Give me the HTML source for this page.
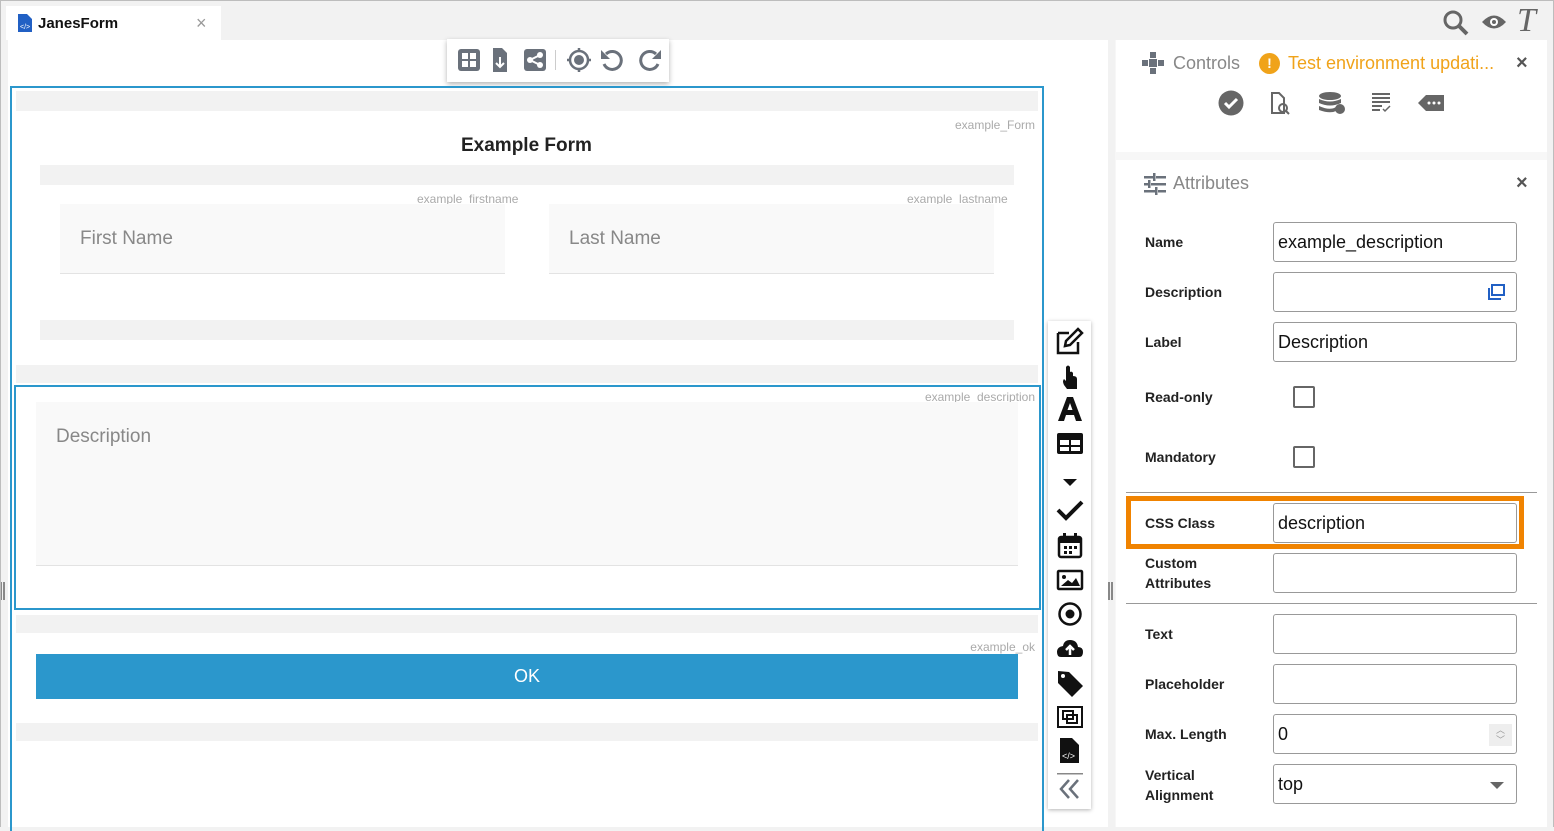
<!DOCTYPE html><html><head><style>
*{box-sizing:border-box;margin:0;padding:0}
body{width:1554px;height:827px;overflow:hidden;background:#f2f2f2;font-family:"Liberation Sans",sans-serif;position:relative}
.a{position:absolute}
.g{background:#f2f2f2}
.lbl{font-size:12px;color:#aaa}
.fl{font-size:14px;font-weight:bold;color:#222;left:1145px}
.in{position:absolute;left:1273px;width:244px;height:40px;border:1px solid #999;border-radius:3px;background:#fff;font-size:18px;color:#111;padding:9px 4px}
</style></head><body>
<div class="a" style="left:0;top:0;width:1554px;height:827px;border:1px solid #bdbdbd;border-bottom:none;z-index:9;pointer-events:none"></div>
<!-- tab -->
<div class="a" style="left:6px;top:6px;width:215px;height:34px;background:#fff"></div>
<svg class="a" style="left:18px;top:14px" width="14" height="18" viewBox="0 0 14 18"><path d="M0 0H9L14 5V18H0Z" fill="#2160c4"/><text x="2" y="15" font-size="7" fill="#fff">&lt;/&gt;</text></svg>
<div class="a" style="left:38px;top:15px;font-size:15px;font-weight:bold;color:#111">JanesForm</div>
<div class="a" style="left:196px;top:13px;font-size:18px;color:#999">×</div>
<!-- top right icons -->
<svg class="a" style="left:1442px;top:10px" width="28" height="26" viewBox="0 0 28 26"><circle cx="11" cy="10" r="8" fill="none" stroke="#666" stroke-width="3"/><path d="M17 16L25 24" stroke="#666" stroke-width="4"/></svg>
<svg class="a" style="left:1481px;top:13px" width="26" height="18" viewBox="0 0 26 18"><path d="M1 9Q13 -4 25 9Q13 22 1 9Z" fill="#666"/><circle cx="13" cy="9" r="4" fill="#fff"/><circle cx="13" cy="9" r="2" fill="#666"/></svg>
<div class="a" style="left:1517px;top:2px;font-family:'Liberation Serif',serif;font-style:italic;font-size:34px;color:#666">T</div>
<!-- canvas -->
<div class="a" style="left:8px;top:40px;width:1100px;height:787px;background:#fff"></div>
<div class="a" style="left:0;top:582px;width:5px;height:18px;border-left:2px solid #888;border-right:2px solid #888"></div>
<div class="a" style="left:1108px;top:582px;width:5px;height:18px;border-left:2px solid #888;border-right:2px solid #888"></div>
<!-- toolbar -->
<div class="a" style="left:447px;top:39px;width:222px;height:43px;background:#fff;box-shadow:0 2px 5px rgba(0,0,0,.3)"></div>
<svg class="a" style="left:458px;top:48px" width="205" height="24" viewBox="0 0 205 24" fill="#6a717b">
<rect x="0" y="1" width="22" height="22" rx="3"/><g fill="#fff"><rect x="4" y="5" width="6" height="6"/><rect x="12" y="5" width="6" height="6"/><rect x="4" y="13" width="6" height="6"/><rect x="12" y="13" width="6" height="6"/></g>
<path d="M35 0H44L49 5V24H35Z"/><path d="M42 9V19M38 15L42 19L46 15" stroke="#fff" stroke-width="2" fill="none"/>
<rect x="66" y="1" width="22" height="22" rx="3"/><g fill="#fff"><circle cx="72" cy="12" r="3"/><circle cx="82" cy="7" r="3"/><circle cx="82" cy="17" r="3"/></g><path d="M72 12L82 7M72 12L82 17" stroke="#fff" stroke-width="2"/>
<rect x="97" y="2" width="1" height="20" fill="#ccc"/>
<circle cx="121" cy="12" r="9" fill="none" stroke="#6a717b" stroke-width="2.5"/><circle cx="121" cy="12" r="5"/><path d="M121 0V4M121 20V24M109 12H113M129 12H133" stroke="#6a717b" stroke-width="2.5"/>
<path d="M148 6A9 9 0 1 1 146 16" fill="none" stroke="#6a717b" stroke-width="3"/><path d="M143 2V11H152Z"/>
<path d="M198 6A9 9 0 1 0 200 16" fill="none" stroke="#6a717b" stroke-width="3"/><path d="M203 2V11H194Z"/>
</svg>
<!-- form -->
<div class="a" style="left:10px;top:86px;width:1034px;height:745px;border:2px solid #2b97cc;border-bottom:none"></div>
<div class="a g" style="left:16px;top:91px;width:1022px;height:20px"></div>
<div class="a lbl" style="right:519px;top:118px">example_Form</div>
<div class="a" style="left:461px;top:135px;font-size:19px;font-weight:bold;color:#222">Example Form</div>
<div class="a g" style="left:40px;top:165px;width:974px;height:20px"></div>
<div class="a lbl" style="left:417px;top:192px">example_firstname</div>
<div class="a lbl" style="left:907px;top:192px">example_lastname</div>
<div class="a" style="left:60px;top:204px;width:445px;height:70px;background:#f9f9f9;border-bottom:1px solid #e3e3e3"></div>
<div class="a" style="left:80px;top:228px;font-size:19px;color:#888">First Name</div>
<div class="a" style="left:549px;top:204px;width:445px;height:70px;background:#f9f9f9;border-bottom:1px solid #e3e3e3"></div>
<div class="a" style="left:569px;top:228px;font-size:19px;color:#888">Last Name</div>
<div class="a g" style="left:40px;top:320px;width:974px;height:20px"></div>
<div class="a g" style="left:16px;top:365px;width:1022px;height:18px"></div>
<div class="a" style="left:14px;top:385px;width:1027px;height:225px;border:2px solid #2b97cc"></div>
<div class="a lbl" style="right:519px;top:390px">example_description</div>
<div class="a" style="left:36px;top:402px;width:982px;height:164px;background:#f9f9f9;border-bottom:1px solid #e3e3e3"></div>
<div class="a" style="left:56px;top:426px;font-size:19px;color:#888">Description</div>
<div class="a g" style="left:16px;top:615px;width:1022px;height:18px"></div>
<div class="a lbl" style="right:519px;top:640px">example_ok</div>
<div class="a" style="left:36px;top:654px;width:982px;height:45px;background:#2b97cc;color:#fff;font-size:18px;text-align:center;line-height:45px">OK</div>
<div class="a g" style="left:16px;top:723px;width:1022px;height:18px"></div>
<!-- side toolbox -->
<div class="a" style="left:1048px;top:321px;width:43px;height:488px;background:#fff;box-shadow:0 1px 4px rgba(0,0,0,.3)"></div>
<svg class="a" style="left:1055px;top:327px" width="30" height="478" viewBox="0 0 30 478" fill="#111">
<path d="M3 6H14M3 6V26H23V15" fill="none" stroke="#111" stroke-width="2.5"/><path d="M10 19L11 14L23 2L27 6L15 18Z" fill="none" stroke="#111" stroke-width="2.5"/>
<path d="M11 42V54L9 52Q7 54 9 58L12 62H22V52Q22 49 18 49V46Q17 44 15 45V40Q13 37 11 40Z"/>
<path d="M3 94L12 70H18L27 94H21L19 88H11L9 94ZM12.5 83H17.5L15 76Z"/>
<rect x="2" y="106" width="26" height="21" rx="2"/><g fill="#fff"><rect x="5" y="113" width="9" height="5"/><rect x="16" y="113" width="9" height="5"/><rect x="5" y="120" width="9" height="4"/><rect x="16" y="120" width="9" height="4"/></g>
<path d="M8 152H22L15 159Z"/>
<path d="M3 183L11 191L27 175" fill="none" stroke="#111" stroke-width="4"/>
<rect x="4" y="210" width="22" height="20" rx="2" fill="none" stroke="#111" stroke-width="2.5"/><rect x="4" y="210" width="22" height="6"/><rect x="8" y="206" width="3" height="5"/><rect x="19" y="206" width="3" height="5"/><g fill="#111"><rect x="9" y="219" width="3" height="3"/><rect x="14" y="219" width="3" height="3"/><rect x="19" y="219" width="3" height="3"/><rect x="9" y="224" width="3" height="3"/><rect x="14" y="224" width="3" height="3"/></g>
<rect x="3" y="244" width="24" height="18" rx="1" fill="none" stroke="#111" stroke-width="2.5"/><circle cx="9" cy="250" r="2"/><path d="M6 259L13 253L17 256L21 251L25 259Z"/>
<circle cx="15" cy="287" r="10.5" fill="none" stroke="#111" stroke-width="2.5"/><circle cx="15" cy="287" r="4.5"/>
<path d="M6 330H24Q28 330 28 325Q28 320 23 320Q22 313 15 313Q9 313 8 319Q2 320 2 325Q2 330 6 330Z"/><path d="M15 328V320M11 323L15 319L19 323" stroke="#fff" stroke-width="2.5" fill="none"/>
<path d="M3 344V356L17 370L28 359L14 345Z"/><circle cx="8" cy="349" r="2" fill="#fff"/>
<rect x="3" y="380" width="24" height="20" fill="none" stroke="#111" stroke-width="2"/><rect x="8" y="384" width="10" height="8" fill="none" stroke="#111" stroke-width="2"/><rect x="12" y="388" width="10" height="8" fill="none" stroke="#111" stroke-width="2"/>
<path d="M5 411H17L24 418V436H5Z"/><text x="7" y="432" font-size="9" fill="#fff">&lt;/&gt;</text>
<rect x="2" y="446" width="26" height="1.5" fill="#888"/>
<path d="M14 453L6 462L14 471M23 453L15 462L23 471" fill="none" stroke="#6a717b" stroke-width="2.5"/>
</svg>
<!-- right panel -->
<div class="a" style="left:1115px;top:40px;width:432px;height:787px;background:#f7f7f7"></div>
<div class="a" style="left:1116px;top:40px;width:431px;height:112px;background:#fff"></div>
<div class="a" style="left:1116px;top:160px;width:431px;height:667px;background:#fff"></div>
<svg class="a" style="left:1142px;top:52px" width="22" height="22" viewBox="0 0 22 22" fill="#6a717b"><rect x="8" y="0" width="6" height="6"/><rect x="0" y="8" width="6" height="6"/><rect x="16" y="8" width="6" height="6"/><rect x="8" y="16" width="6" height="6"/><rect x="7" y="7" width="8" height="8"/></svg>
<div class="a" style="left:1173px;top:53px;font-size:18px;color:#888">Controls</div>
<div class="a" style="left:1259px;top:53px;width:21px;height:21px;border-radius:50%;background:#f0a31a;color:#fff;font-size:14px;font-weight:bold;text-align:center;line-height:21px">!</div>
<div class="a" style="left:1288px;top:53px;font-size:18px;color:#f0a31a">Test environment updati...</div>
<div class="a" style="left:1516px;top:52px;font-size:20px;color:#555;font-weight:bold">×</div>
<svg class="a" style="left:1218px;top:90px" width="230" height="26" viewBox="0 0 230 26" fill="#666">
<circle cx="13" cy="13" r="12.5"/><path d="M7 13L11 17L19 9" stroke="#fff" stroke-width="3" fill="none"/>
<path d="M54 3H61L66 8V23H54Z" fill="none" stroke="#666" stroke-width="2"/><circle cx="65" cy="18" r="4" fill="none" stroke="#666" stroke-width="2"/><path d="M68 21L71 24" stroke="#666" stroke-width="2"/>
<ellipse cx="112" cy="6" rx="11" ry="4"/><path d="M101 9Q112 14 123 9V13Q112 18 101 13ZM101 16Q112 21 118 17V21Q112 24 101 20Z"/><circle cx="122" cy="19" r="5"/>
<path d="M154 4H172M154 8H172M154 12H172M154 16H164M154 20H162" stroke="#666" stroke-width="2"/><path d="M165 19L167 21L172 16" stroke="#666" stroke-width="1.5" fill="none"/>
<path d="M208 5H226V21H208L200 13Z"/><g fill="#fff"><circle cx="211" cy="13" r="1.5"/><circle cx="216" cy="13" r="1.5"/><circle cx="221" cy="13" r="1.5"/></g>
</svg>
<svg class="a" style="left:1144px;top:173px" width="22" height="22" viewBox="0 0 22 22" fill="#6a717b"><rect x="0" y="3" width="9" height="2.5"/><rect x="12" y="3" width="10" height="2.5"/><rect x="9" y="0" width="2.5" height="8"/><rect x="0" y="10" width="4" height="2.5"/><rect x="7" y="10" width="15" height="2.5"/><rect x="4" y="7" width="2.5" height="8"/><rect x="0" y="17" width="11" height="2.5"/><rect x="14" y="17" width="8" height="2.5"/><rect x="11" y="14" width="2.5" height="8"/></svg>
<div class="a" style="left:1173px;top:173px;font-size:18px;color:#888">Attributes</div>
<div class="a" style="left:1516px;top:172px;font-size:20px;color:#555;font-weight:bold">×</div>
<div class="a fl" style="top:234px">Name</div><div class="in" style="top:222px">example_description</div>
<div class="a fl" style="top:284px">Description</div><div class="in" style="top:272px"></div>
<svg class="a" style="left:1488px;top:284px" width="18" height="16" viewBox="0 0 18 16"><rect x="4" y="1" width="12" height="10" fill="none" stroke="#2160c4" stroke-width="2"/><path d="M1 4V15H13" fill="none" stroke="#2160c4" stroke-width="2"/></svg>
<div class="a fl" style="top:334px">Label</div><div class="in" style="top:322px">Description</div>
<div class="a fl" style="top:389px">Read-only</div><div class="a" style="left:1293px;top:386px;width:22px;height:22px;border:2px solid #666;border-radius:2px"></div>
<div class="a fl" style="top:449px">Mandatory</div><div class="a" style="left:1293px;top:446px;width:22px;height:22px;border:2px solid #666;border-radius:2px"></div>
<div class="a" style="left:1126px;top:492px;width:411px;height:1px;background:#999"></div>
<div class="a" style="left:1126px;top:496px;width:398px;height:53px;border:5px solid #f08300"></div>
<div class="a fl" style="top:515px">CSS Class</div><div class="in" style="top:503px">description</div>
<div class="a fl" style="top:553px;line-height:20px">Custom<br>Attributes</div><div class="in" style="top:553px"></div>
<div class="a" style="left:1126px;top:603px;width:411px;height:1px;background:#999"></div>
<div class="a fl" style="top:626px">Text</div><div class="in" style="top:614px"></div>
<div class="a fl" style="top:676px">Placeholder</div><div class="in" style="top:664px"></div>
<div class="a fl" style="top:726px">Max. Length</div><div class="in" style="top:714px">0</div>
<div class="a" style="left:1489px;top:724px;width:23px;height:22px;background:#eee;color:#999;font-size:9px;text-align:center;line-height:10px;padding-top:1px">︿<br>﹀</div>
<div class="a fl" style="top:765px;line-height:20px">Vertical<br>Alignment</div><div class="in" style="top:764px">top</div>
<div class="a" style="left:1490px;top:782px;border-left:7px solid transparent;border-right:7px solid transparent;border-top:7px solid #666"></div>
</body></html>
